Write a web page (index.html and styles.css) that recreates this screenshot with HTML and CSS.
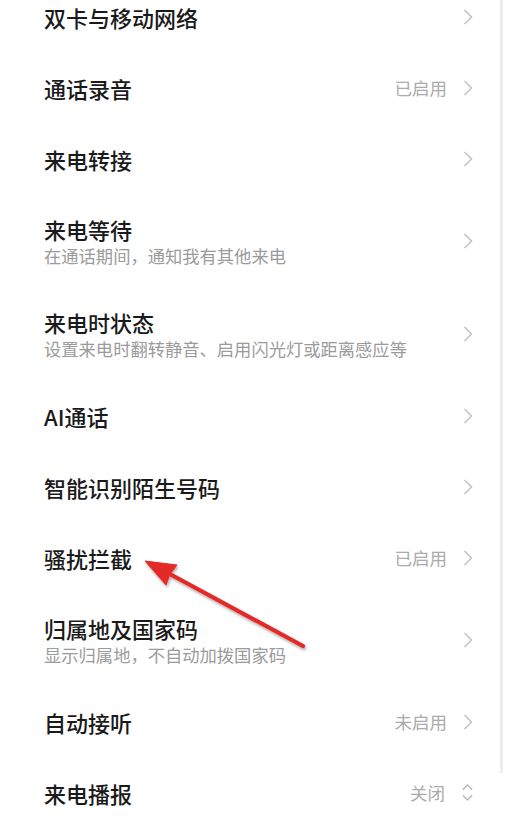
FILE: index.html
```html
<!DOCTYPE html>
<html lang="zh-CN">
<head>
<meta charset="utf-8">
<link rel="stylesheet" href="styles.css">
</head>
<body>
<div class="page">
  <ul class="list">
    <li class="row"><div class="text"><div class="title">双卡与移动网络</div></div><div class="end"><svg class="chev" viewBox="0 0 10 16"><path d="M1.5 1 L8.5 8 L1.5 15"/></svg></div></li>
    <li class="row"><div class="text"><div class="title">通话录音</div></div><div class="end"><span class="value">已启用</span><svg class="chev" viewBox="0 0 10 16"><path d="M1.5 1 L8.5 8 L1.5 15"/></svg></div></li>
    <li class="row"><div class="text"><div class="title">来电转接</div></div><div class="end"><svg class="chev" viewBox="0 0 10 16"><path d="M1.5 1 L8.5 8 L1.5 15"/></svg></div></li>
    <li class="row"><div class="text"><div class="title">来电等待</div><div class="sub">在通话期间，通知我有其他来电</div></div><div class="end"><svg class="chev" viewBox="0 0 10 16"><path d="M1.5 1 L8.5 8 L1.5 15"/></svg></div></li>
    <li class="row"><div class="text"><div class="title">来电时状态</div><div class="sub">设置来电时翻转静音、启用闪光灯或距离感应等</div></div><div class="end"><svg class="chev" viewBox="0 0 10 16"><path d="M1.5 1 L8.5 8 L1.5 15"/></svg></div></li>
    <li class="row"><div class="text"><div class="title">AI通话</div></div><div class="end"><svg class="chev" viewBox="0 0 10 16"><path d="M1.5 1 L8.5 8 L1.5 15"/></svg></div></li>
    <li class="row"><div class="text"><div class="title">智能识别陌生号码</div></div><div class="end"><svg class="chev" viewBox="0 0 10 16"><path d="M1.5 1 L8.5 8 L1.5 15"/></svg></div></li>
    <li class="row"><div class="text"><div class="title">骚扰拦截</div></div><div class="end"><span class="value">已启用</span><svg class="chev" viewBox="0 0 10 16"><path d="M1.5 1 L8.5 8 L1.5 15"/></svg></div></li>
    <li class="row"><div class="text"><div class="title">归属地及国家码</div><div class="sub">显示归属地，不自动加拨国家码</div></div><div class="end"><svg class="chev" viewBox="0 0 10 16"><path d="M1.5 1 L8.5 8 L1.5 15"/></svg></div></li>
    <li class="row"><div class="text"><div class="title">自动接听</div></div><div class="end"><span class="value">未启用</span><svg class="chev" viewBox="0 0 10 16"><path d="M1.5 1 L8.5 8 L1.5 15"/></svg></div></li>
    <li class="row"><div class="text"><div class="title">来电播报</div></div><div class="end"><span class="value">关闭</span><svg class="updown" viewBox="0 0 14 20"><path d="M2 7 L7 2 L12 7 M2 13 L7 18 L12 13"/></svg></div></li>
  </ul>
  <svg class="arrow" viewBox="0 0 526 816" width="526" height="816">
    <defs>
      <filter id="sh" x="-20%" y="-20%" width="140%" height="140%">
        <feDropShadow dx="1" dy="2" stdDeviation="1.6" flood-color="#000" flood-opacity="0.35"/>
      </filter>
    </defs>
    <g filter="url(#sh)" fill="#e42a27" stroke="#e42a27">
      <line x1="303" y1="646" x2="168" y2="573" stroke-width="4.2" stroke-linecap="round"/>
      <path d="M145 561 L177 565 L170 574 L166 585 Z" stroke-width="1" stroke-linejoin="round"/>
    </g>
  </svg>
</div>
</body>
</html>
```

FILE: styles.css
```css
html, body {
  margin: 0;
  padding: 0;
  background: #ffffff;
  overflow: hidden;
}
body {
  width: 526px;
  height: 816px;
  font-family: "Noto Sans CJK SC", "Noto Sans", sans-serif;
}
.page {
  width: 500px;
  height: 792px;
  border-right: 3px solid #eeeeee;
}
.list {
  list-style: none;
  margin: -19px 0 0 0;
  padding: 0;
}
.row {
  display: flex;
  align-items: center;
  justify-content: space-between;
  box-sizing: border-box;
  min-height: 71px;
  padding: 20px 27px 20px 44px;
}
.text {
  display: flex;
  flex-direction: column;
}
.title {
  font-size: 22px;
  line-height: 30px;
  font-weight: 500;
  color: #1a1a1a;
}
.sub {
  font-size: 17.3px;
  line-height: 23px;
  color: #9b9b9b;
}
.end {
  display: flex;
  align-items: center;
  gap: 16px;
}
.value {
  font-size: 17.5px;
  color: #ababab;
}
.chev {
  width: 10px;
  height: 16px;
  fill: none;
  stroke: #c2c2c2;
  stroke-width: 1.5;
}
.updown {
  width: 13px;
  height: 19px;
  margin-right: -1px;
  fill: none;
  stroke: #b8b8b8;
  stroke-width: 1.6;
}
.arrow {
  position: absolute;
  left: 0;
  top: 0;
  pointer-events: none;
}
```
